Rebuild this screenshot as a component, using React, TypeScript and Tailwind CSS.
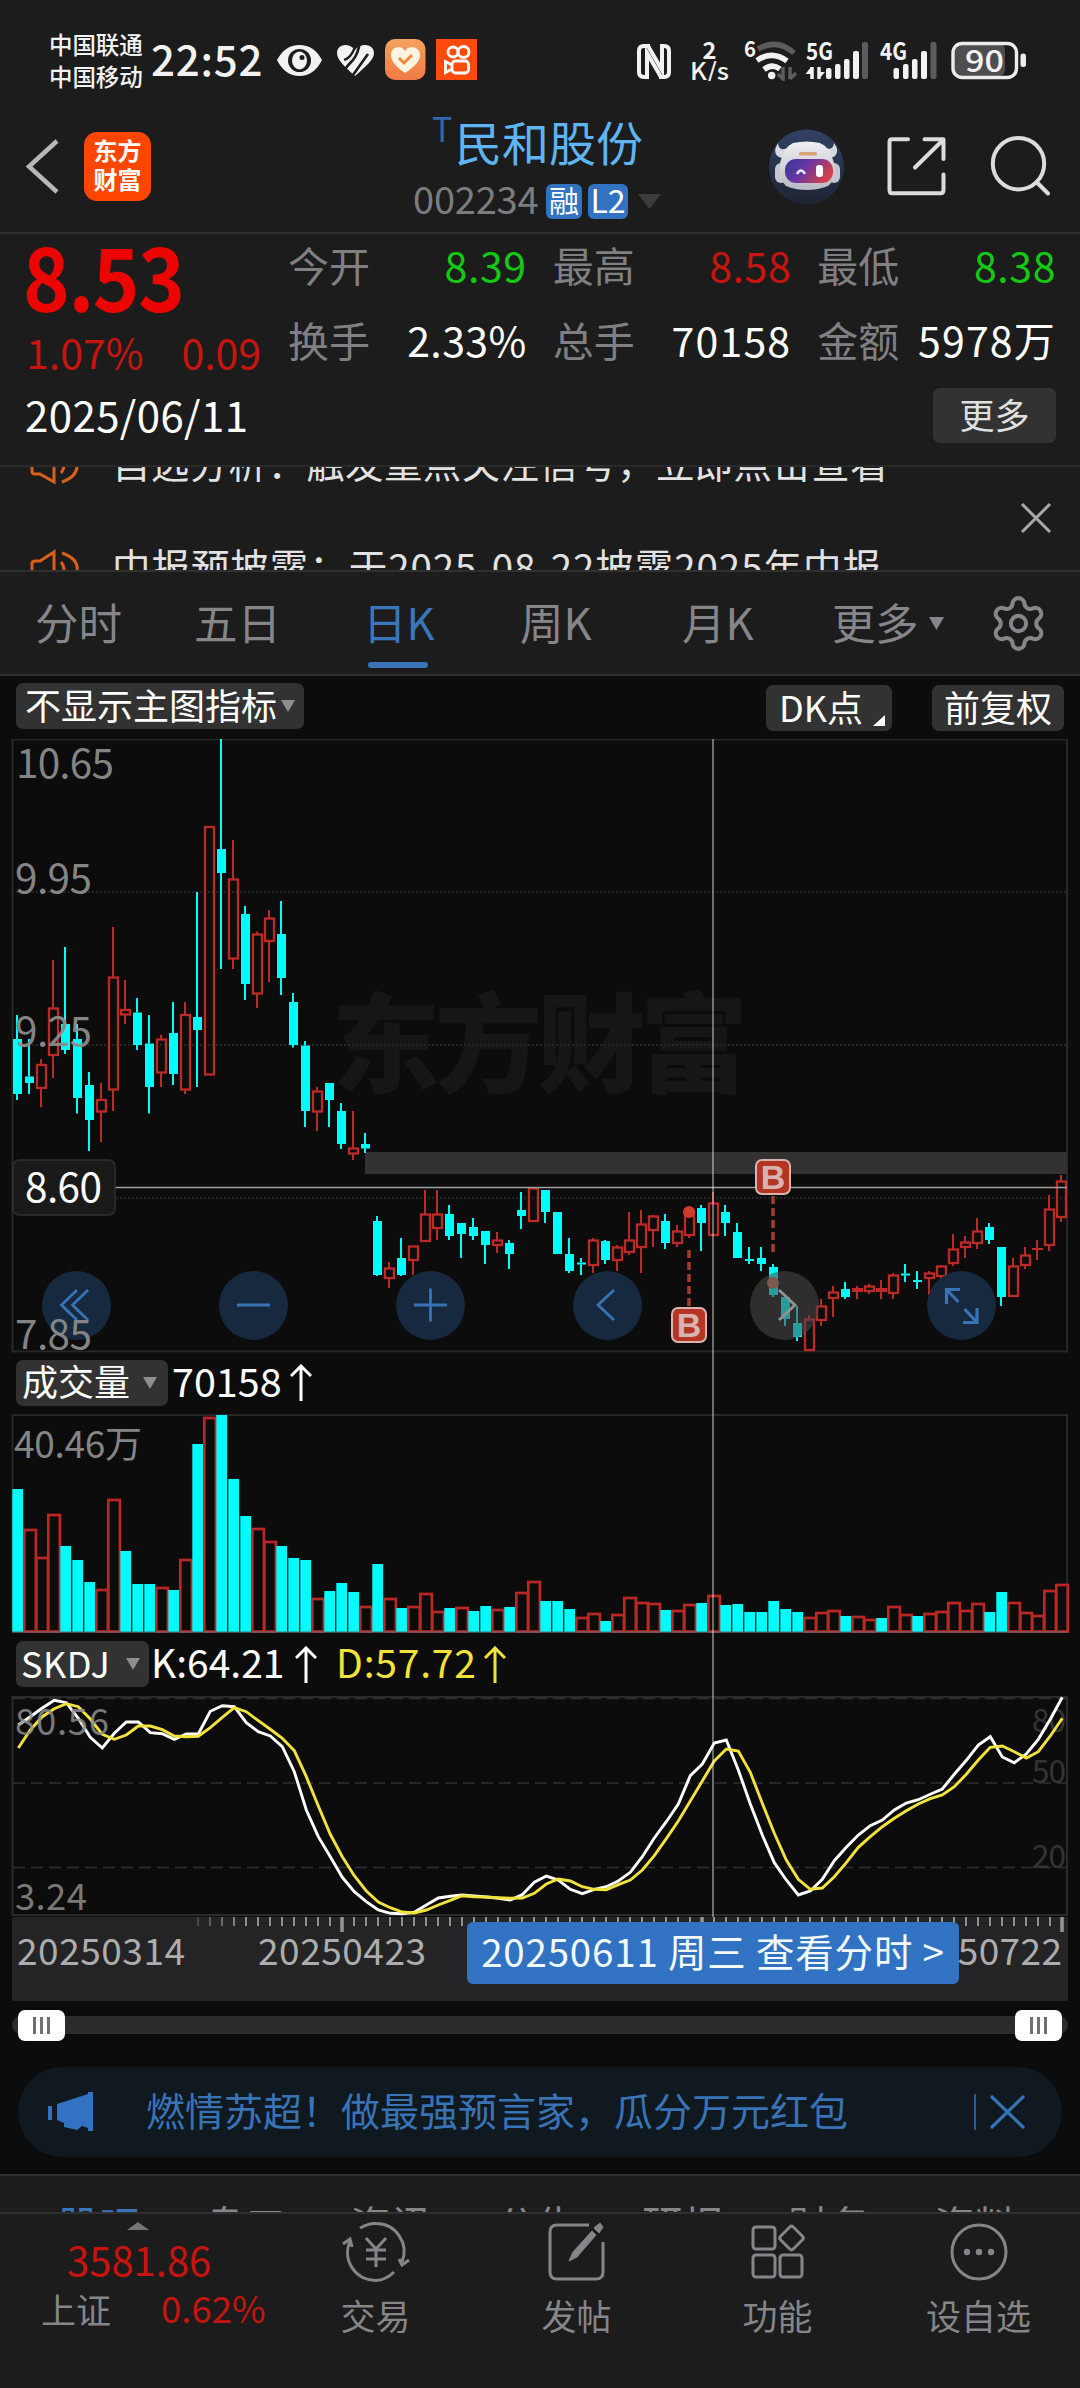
import type { ReactNode } from "react"
import { Settings } from "lucide-react"

// [up, high, bodyTop, bodyBottom, low] as offsets from the top of the price pane
type Candle = [number, number, number, number, number]

const CANDLES: Candle[] = [
  [0, 276, 300, 355, 361], [0, 300, 337.5, 344, 355], [1, 320, 325.5, 349, 368], [1, 221, 269, 316, 339],
  [0, 208, 285, 311, 315], [0, 285, 300, 359, 374.5], [0, 333, 346, 381, 412], [1, 344, 360.5, 372.5, 403],
  [1, 188, 238, 350.5, 372], [1, 241, 270.5, 275.5, 285], [0, 259, 273.5, 306, 311], [0, 276, 304.5, 348, 374.5],
  [1, 296, 300, 333.5, 348], [0, 263, 294, 335, 346], [1, 263, 275.5, 350.5, 355], [0, 153, 278, 291, 348],
  [1, 87.5, 87.5, 335.5, 335.5], [0, 0, 110, 134, 230], [1, 101, 140, 219.5, 230], [0, 167, 175, 245, 261],
  [1, 192.5, 195, 254.5, 269], [1, 171, 179, 202, 243], [0, 162, 195, 239, 256], [0, 254, 263, 306, 308.5],
  [0, 302, 306.5, 372, 388], [1, 348, 352, 372.5, 392], [0, 344, 344, 361, 388], [0, 364, 372, 405, 410],
  [1, 372, 409, 414.5, 421], [0, 394, 405, 409.5, 414], [0, 477, 482, 536, 537], [1, 523, 529, 539, 549],
  [0, 499, 519, 536, 537], [1, 507, 507, 521, 536], [1, 451, 475, 502, 503], [1, 451, 475, 489, 501],
  [0, 466, 475, 497, 501], [0, 484, 484, 495, 519], [0, 479, 488, 497, 501], [0, 492, 492, 506, 525],
  [1, 493, 501, 506, 514], [0, 501, 504, 515, 530], [0, 453, 471, 477, 490], [1, 448, 449, 482, 482],
  [0, 451, 451, 473, 484], [0, 473, 473, 515, 515], [0, 499, 515, 532, 534], [0, 519, 523.5, 525.5, 536],
  [1, 499, 501, 526, 534], [0, 501, 502, 521, 525], [1, 506, 508, 521, 532], [1, 473, 501, 513, 516],
  [1, 471, 485, 508, 534], [1, 476, 477, 491, 508], [0, 475, 482, 504, 510], [1, 486, 492, 504, 508],
  [1, 471, 471, 496, 499], [0, 466, 469, 484, 512], [1, 453, 464, 496, 497], [0, 466, 473, 484, 497],
  [0, 484, 493, 519, 519], [0, 508, 520, 522, 525], [0, 508, 519, 525, 532], [0, 525, 528, 556, 558],
  [0, 558, 558, 580, 587], [0, 567, 584, 598, 602], [1, 576, 580, 611, 612], [1, 560, 567, 581, 587],
  [1, 547, 553, 559, 578], [0, 543, 550, 558, 560], [1, 547, 549, 553, 560], [1, 545, 547, 552, 555],
  [1, 541, 549, 553, 560], [1, 534, 536, 554, 560], [0, 525, 534.5, 536.5, 543], [0, 532, 541, 543, 550],
  [1, 532, 534, 539, 556], [1, 526, 527, 537, 545], [1, 495, 510, 524, 527], [1, 497, 503, 508, 519],
  [1, 479, 492, 504, 510], [0, 484, 488, 501, 505], [0, 508, 508, 558, 567], [1, 519, 527, 557, 558],
  [1, 508, 516, 526, 530], [1, 501, 509, 511, 521], [1, 456, 470, 506, 512], [1, 436, 442, 478, 483],
]

// bar heights, negative ones are falling days
const VOLUMES = [
  -143, 103, 75, 118, -86, -72, -50, 43, 133, -81, -48, -48, 45, -42, 73, -188, 215, -217, -153, -116, 104, 91,
  -86, -74, -72, 34, -41, -49, -40, 26, -68, 34, -24, 26, 39, 21, -24, 25, -21, -26, 23, -25, 40, 51, -31, -31,
  -23, 15, 19, -11, 18, 35, 30, 29, -22, 22, 28, -29, 37, -27, -28, -20, -20, -31, -23, -20, 15, 20, 22, -16,
  16, 13, -14, 26, 18, -16, 19, 21, 30, 22, 29, -20, -40, 30, 20, 17, 42, 48,
]

const K_LINE = [
  135, 110, 84, 61, 68, 115, 172, 204, 160, 126, 126, 158, 161, 178, 162, 162, 94, 77, 80, 128, 155, 168, 200, 275,
  390, 470, 530, 592, 635, 665, 690, 700, 701, 697, 675, 654, 649, 645, 648, 651, 655, 660, 644, 607, 588, 600, 628,
  641, 628, 620, 603, 577, 530, 474, 425, 372, 287, 252, 189, 180, 270, 372, 465, 548, 600, 645, 633, 598, 542, 502,
  465, 437, 420, 390, 369, 359, 343, 327, 283, 241, 195, 170, 231, 248, 222, 178, 118, 52,
]

const D_LINE = [
  204, 150, 110, 86, 71, 80, 117, 163, 178, 165, 138, 138, 149, 168, 170, 169, 143, 112, 83, 95, 122, 148, 175, 212,
  290, 378, 463, 530, 587, 633, 666, 683, 696, 699, 690, 675, 661, 647, 650, 651, 653, 655, 654, 640, 612, 597, 603,
  620, 628, 629, 614, 600, 570, 527, 476, 423, 363, 303, 243, 207, 213, 277, 370, 460, 540, 598, 628, 624, 590, 548,
  502, 470, 440, 415, 392, 372, 356, 345, 320, 283, 240, 202, 198, 215, 234, 215, 168, 115,
]

const toPoints = (values: number[]) =>
  values.map((v, i) => `${(18.3 + i * 12).toFixed(1)},${((v - 48) / 3).toFixed(1)}`).join(" ")

function StatusBar() {
  return (
    <div className="flex h-[104px] shrink-0 items-center pt-[16px] pl-[49px] text-[#f2f2f2]">
      <div className="w-[96px] text-[23.5px] font-medium leading-[32.5px] tracking-[-0.1px]">
        <div>中国联通</div>
        <div>中国移动</div>
      </div>
      <div className="ml-[6px] w-[120px] pb-[4px] text-[42px] font-medium leading-none tracking-[0.8px]">22:52</div>
      <svg className="ml-[6px] h-[42px] w-[200px] shrink-0" viewBox="277 39 200 42">
        <path d="M277 60 Q285 45 299.500 45 Q314 45 322 60 Q314 76 299.500 76 Q285 76 277 60Z" fill="#f2f2f2" />
        <circle cx="299.500" cy="60.500" r="11.500" fill="#1c1c1c" />
        <ellipse cx="299.500" cy="60.500" rx="7.500" ry="9" fill="#f2f2f2" />
        <circle cx="302" cy="57.500" r="2.500" fill="#1c1c1c" />
        <path d="M355 76 C345 67 337 60 337 53 C337 44 349 42 355 50 C361 42 374 44 374 53 C374 60 365 67 355 76Z" fill="#f2f2f2" />
        <path d="M345 69 Q349 64 353 60 Q358 54 360 42 M353 75 L368 54" stroke="#1c1c1c" strokeWidth="2.600" fill="none" />
        <path d="M344 60 Q351 58 355 47" stroke="#1c1c1c" strokeWidth="2.200" fill="none" />
        <defs>
          <linearGradient id="care" x1="0" y1="0" x2="0" y2="1">
            <stop offset="0" stopColor="#f5a25e" />
            <stop offset="1" stopColor="#f27a45" />
          </linearGradient>
        </defs>
        <rect x="385" y="39" width="40.500" height="41" rx="10" fill="url(#care)" />
        <path d="M405 73 C392 64 391 58 391 55 C391 47 401 44 405 51 C409 44 420 47 420 55 C420 60 417 65 405 73Z" fill="#fff3e2" />
        <path d="M399 58 L404 63 L412 55" stroke="#f08a3c" strokeWidth="3" fill="none" />
        <rect x="436" y="39" width="41" height="41" fill="#ff4a0c" />
        <g stroke="#fff" strokeWidth="2.800" fill="none">
          <circle cx="453" cy="52" r="5" />
          <circle cx="463.500" cy="52" r="5.500" />
          <rect x="452" y="61" width="16.500" height="12" rx="3.500" />
          <path d="M452 65 L445.500 61.500 V72.500 L452 69" />
        </g>
      </svg>
      <svg className="ml-[158px] h-[42px] w-[400px] shrink-0" viewBox="635 38 400 42" fill="#f2f2f2">
        <g fill="none" stroke="#f2f2f2" strokeWidth="4">
          <path d="M650 45 H644 Q639 45 639 50 V71 Q639 76 644 76 H647 V52 L661 76" />
          <path d="M648 45 L662 69 V45 H664 Q669 45 669 50 V71 Q669 76 664 76 H659" />
        </g>
        <text x="702.500" y="58" fontSize="23.500" fontWeight="700">2</text>
        <text x="690" y="79" fontSize="23.500" fontWeight="500" textLength="39" lengthAdjust="spacingAndGlyphs">K/s</text>
        <text x="744" y="56" fontSize="22" fontWeight="700" textLength="12" lengthAdjust="spacingAndGlyphs">6</text>
        <g fill="none" strokeWidth="5.500" strokeLinecap="butt">
          <path d="M758 48 Q777 37 794 52" stroke="#5c5c5e" />
          <path d="M757 59.500 Q772 49 787 60" stroke="#f2f2f2" />
          <path d="M764 68.500 Q772 62 780 68" stroke="#f2f2f2" />
        </g>
        <circle cx="771.700" cy="74.500" r="3.700" />
        <path d="M783 66 V78 L778 73 M790 66 V78 M790 78 L796 72" stroke="#5c5c5e" strokeWidth="3.500" fill="none" />
        <text x="806" y="59" fontSize="23.500" fontWeight="700" textLength="27" lengthAdjust="spacingAndGlyphs">5G</text>
        <path d="M812 66 V78 M819 66 V78" stroke="#f2f2f2" strokeWidth="3.500" />
        <path d="M811 66 L805.500 73 H811Z M819 78 L825 71 H819Z" />
        <rect x="826" y="67" width="5.500" height="11" rx="2" />
        <rect x="835" y="63" width="5.500" height="15" rx="2" />
        <rect x="844" y="58" width="5.500" height="20" rx="2" />
        <rect x="853" y="50" width="6" height="28" rx="2" />
        <rect x="862" y="41" width="6" height="37" rx="2" fill="#5c5c5e" />
        <text x="880" y="59" fontSize="23.500" fontWeight="700" textLength="27" lengthAdjust="spacingAndGlyphs">4G</text>
        <rect x="893.500" y="67" width="5.500" height="11" rx="2" />
        <rect x="903" y="63" width="5.500" height="15" rx="2" />
        <rect x="912" y="58" width="5.500" height="20" rx="2" />
        <rect x="921" y="50" width="6" height="28" rx="2" />
        <rect x="930.500" y="41" width="6" height="37" rx="2" fill="#5c5c5e" />
        <rect x="954" y="43" width="51" height="32" rx="6" fill="#4e4e50" />
        <rect x="953" y="42.500" width="63.500" height="34" rx="9" fill="none" stroke="#ececec" strokeWidth="3.400" />
        <rect x="1020.500" y="52.500" width="5.500" height="13.500" rx="2.500" fill="#ececec" />
        <text x="965" y="71" fontSize="31" fontWeight="500" textLength="39" lengthAdjust="spacingAndGlyphs">90</text>
      </svg>
    </div>
  )
}

function Header() {
  return (
    <header className="flex h-[130px] shrink-0 items-start border-b-2 border-[#303030] text-white">
      <svg className="mt-[34px] ml-[24px] h-[56px] w-[38px]" viewBox="0 0 38 56" fill="none" stroke="#b8b8b8" strokeWidth="4.500">
        <path d="M33 3 L5 28.500 L33 54" />
      </svg>
      <div className="mt-[28px] ml-[22px] flex h-[69px] w-[67px] flex-col items-center rounded-[13px] bg-[#ff4600] pt-[4px] text-[24px] font-bold leading-[28.5px]">
        <span>东方</span>
        <span>财富</span>
      </div>
      <div className="ml-[261px] w-[260px]">
        <div className="flex h-[72px] pl-[20px]">
          <span className="mt-[7px] w-[23px] text-[34px] leading-none text-[#2f68a8]">T</span>
          <span className="mt-[13px] whitespace-nowrap text-[47px] leading-none text-[#5fb4f3]">民和股份</span>
        </div>
        <div className="flex h-[50px] items-center pl-[1px]">
          <span className="w-[133px] pb-[6px] text-[38px] leading-none tracking-[-0.2px] text-[#7c7c80]">002234</span>
          <span className="flex h-[35px] w-[36px] items-center justify-center rounded-[6px] bg-[#3173c0] pb-[4px] text-[30px] leading-none">融</span>
          <span className="ml-[6px] flex h-[35px] w-[40px] items-center justify-center rounded-[6px] bg-[#3173c0] pb-[4px] text-[32px] leading-none">L2</span>
          <svg className="ml-[10px] h-[15px] w-[23px]" viewBox="0 0 23 15"><path d="M0 0 H23 L11.500 15Z" fill="#3c3c3e" /></svg>
        </div>
      </div>
      <svg className="mt-[25px] ml-[96px] h-[76px] w-[77px]" viewBox="0 0 77 76">
        <defs>
          <linearGradient id="visor" x1="0" y1="0" x2="1" y2="0.4">
            <stop offset="0" stopColor="#33399c" />
            <stop offset="0.5" stopColor="#6a35a0" />
            <stop offset="1" stopColor="#d0404e" />
          </linearGradient>
          <linearGradient id="sky" x1="0" y1="0" x2="0" y2="1">
            <stop offset="0" stopColor="#324264" />
            <stop offset="1" stopColor="#1d2433" />
          </linearGradient>
          <linearGradient id="shell" x1="0" y1="0" x2="0" y2="1">
            <stop offset="0" stopColor="#eeeef2" />
            <stop offset="1" stopColor="#b9bac2" />
          </linearGradient>
        </defs>
        <circle cx="38.500" cy="38" r="37.500" fill="url(#sky)" />
        <path d="M10 14 Q4 24 11 28 Q14 30 18 27 L21 18 Q11 24 10 14Z M66 14 Q72 22 67 27 Q63 30 59 26 L55 18 Q65 23 66 14Z" fill="#d8d9e0" />
        <rect x="7" y="34" width="12" height="20" rx="6" fill="#c4c6d0" />
        <rect x="60" y="34" width="12" height="20" rx="6" fill="#c4c6d0" />
        <path d="M25 14 Q39 11 52 14 Q62 18 66 34 Q69 50 60 57 Q50 61 39 61 Q27 61 18 57 Q10 50 12 34 Q16 18 25 14Z" fill="url(#shell)" />
        <rect x="17" y="30" width="48" height="24" rx="11" fill="url(#visor)" />
        <path d="M29 45 Q33 38 37 45" stroke="#dfe4ff" strokeWidth="2.500" fill="none" />
        <rect x="48" y="36" width="7" height="12" rx="3" fill="#fff" />
        <rect x="31" y="23" width="18" height="3.500" rx="1.500" fill="#d9a37a" />
      </svg>
      <svg className="mt-[31px] ml-[39px] h-[62px] w-[62px]" viewBox="0 0 62 62" fill="none" stroke="#dcdcdc" strokeWidth="4" strokeLinecap="round" strokeLinejoin="round">
        <path d="M24 4.300 H8 Q5.500 4.300 5.500 7 V55 Q5.500 58.300 8 58.300 H56.500 Q59.500 58.300 59.500 55 V39.500" />
        <path d="M40.500 4.300 H59.500 V24 M59 5 L31 32.500" />
      </svg>
      <svg className="mt-[30px] ml-[41px] h-[64px] w-[64px]" viewBox="0 0 64 64" fill="none" stroke="#dcdcdc" strokeWidth="4" strokeLinecap="round">
        <circle cx="31.500" cy="29.700" r="25.700" />
        <path d="M50 48.500 L61 59.500" />
      </svg>
    </header>
  )
}

function Quote({ label, value, tone }: { label: string; value: string; tone: string }) {
  return (
    <div className="flex items-center justify-between whitespace-nowrap pb-[5px] text-[41px] leading-none">
      <span className="text-[#808084]">{label}</span>
      <span className={tone}>{value}</span>
    </div>
  )
}

function QuotePanel() {
  return (
    <section className="h-[233px] shrink-0 border-b-2 border-[#2a2a2a] text-[41px] leading-none">
      <div className="flex h-[152px] pl-[26px]">
        <div className="w-[262px]">
          <div className="flex h-[88px] items-center pb-[9px] text-[88px] font-bold leading-none">
            <span className="origin-left -translate-x-[3px] scale-x-[0.9] tracking-[-1.5px] text-[#eb0400]">8.53</span>
          </div>
          <div className="flex h-[64px] items-center gap-[38px] pb-[5px] text-[41px] text-[#c8140f]">
            <span>1.07%</span>
            <span>0.09</span>
          </div>
        </div>
        <div className="grid w-[768px] grid-cols-3 grid-rows-[66px_84px] gap-x-[26px]">
          <Quote label="今开" value="8.39" tone="tracking-[0.6px] text-[#14c814]" />
          <Quote label="最高" value="8.58" tone="tracking-[0.6px] text-[#c8140f]" />
          <Quote label="最低" value="8.38" tone="tracking-[0.6px] text-[#14c814]" />
          <Quote label="换手" value="2.33%" tone="tracking-[0.4px] text-white" />
          <Quote label="总手" value="70158" tone="tracking-[1.2px] text-white" />
          <Quote label="金额" value="5978万" tone="tracking-[1.2px] text-white" />
        </div>
      </div>
      <div className="flex items-start justify-between pr-[24px] pl-[25px]">
        <span className="pt-[7px] text-[42px] tracking-[0.4px] text-white">2025/06/11</span>
        <span className="mt-[2px] flex h-[55px] w-[123px] items-center justify-center rounded-[7px] bg-[#323232] pb-[5px] text-[35px] text-[#e0e0e0]">更多</span>
      </div>
    </section>
  )
}

function Speaker() {
  return (
    <svg className="h-[40px] w-[52px] shrink-0" viewBox="0 0 52 40" fill="none" stroke="#d9601a" strokeWidth="3">
      <path d="M25 3 V37 L11 29 H6 Q3 29 3 26 V15 Q3 12 6 12 H11Z" />
      <path d="M32 13 Q38 20 32 28 M33 4 Q50 10 48 22 Q47 32 33 37" />
    </svg>
  )
}

function NewsTicker() {
  return (
    <section className="flex h-[105px] shrink-0 justify-between overflow-hidden border-b-2 border-[#303030] pr-[28px] pl-[29px]">
      <div className="mt-[-54px] text-[38.5px] leading-none text-[#e2e2e2]">
        <div className="flex h-[104px] items-center whitespace-nowrap">
          <Speaker />
          <span className="ml-[31px] pb-[8px] tracking-[0.35px]">自选分析：触发重点关注信号，立即点击查看</span>
        </div>
        <div className="flex h-[104px] items-center whitespace-nowrap">
          <Speaker />
          <span className="ml-[31px] pb-[8px] tracking-[0.95px]">中报预披露：于2025-08-22披露2025年中报</span>
        </div>
      </div>
      <svg className="mt-[35px] h-[32px] w-[32px]" viewBox="0 0 32 32" stroke="#a8a8a8" strokeWidth="3">
        <path d="M2 2 L30 30 M30 2 L2 30" />
      </svg>
    </section>
  )
}

function PeriodTabs() {
  return (
    <nav className="flex h-[104px] shrink-0 border-b-2 border-[#303030] pl-[35px] text-[43.5px] leading-none text-[#85858a]">
      <span className="w-[159px] pt-[28px]">分时</span>
      <span className="w-[169px] pt-[28px]">五日</span>
      <span className="flex w-[157px] flex-col pt-[28px] text-[#3a76bb]">
        日K
        <i className="mt-[18px] ml-[5px] h-[6px] w-[60px] rounded-full bg-[#3a73b8]" />
      </span>
      <span className="w-[162px] pt-[28px]">周K</span>
      <span className="w-[150px] pt-[28px]">月K</span>
      <span className="w-[97px] whitespace-nowrap pt-[28px] tracking-[-0.5px]">更多</span>
      <svg className="mt-[45px] h-[13px] w-[15px]" viewBox="0 0 15 13"><path d="M0 0 H15 L7.500 13Z" fill="#85858a" /></svg>
      <Settings className="mt-[21px] ml-[44px] h-[61px] w-[61px]" strokeWidth={1.6} />
    </nav>
  )
}

function Chip({ className, children }: { className: string; children: ReactNode }) {
  return (
    <span className={`flex h-[46px] shrink-0 items-center whitespace-nowrap rounded-[7px] bg-[#323232] text-[36px] leading-none text-white ${className}`}>
      {children}
    </span>
  )
}

function Caret({ className }: { className: string }) {
  return <svg className={`h-[12px] w-[14px] ${className}`} viewBox="0 0 14 12"><path d="M0 0 H14 L7 12Z" fill="#8e8e92" /></svg>
}

function UpArrow({ className }: { className: string }) {
  return (
    <svg className={`h-[37px] w-[22px] ${className}`} viewBox="0 0 22 37" fill="none" stroke="currentColor" strokeWidth="3">
      <path d="M11 37 V3 M1 12 L11 2 L21 12" />
    </svg>
  )
}

function CandleStick({ candle, index }: { candle: Candle; index: number }) {
  const [up, high, top, bottom, low] = candle
  const x = 17 + index * 12
  const color = up ? "#bd2927" : "#00fdfd"
  const flat = bottom - top < 5
  return (
    <g>
      {high < top && <rect x={x - 1} y={high} width={2} height={top - high} fill={color} />}
      {low > bottom && <rect x={x - 1} y={bottom} width={2} height={low - bottom} fill={color} />}
      {up && !flat ? (
        <rect x={x - 4} y={top + 0.5} width={9} height={bottom - top - 0.5} fill="none" stroke={color} strokeWidth={2.3} />
      ) : (
        <rect x={up ? x - 5 : x - 4} y={top} width={up ? 11 : 9} height={Math.max(bottom - top, 2)} fill={color} />
      )}
    </g>
  )
}

function BuyMark({ x, y }: { x: number; y: number }) {
  return (
    <g>
      <rect x={x - 17} y={y - 17} width="34" height="34" rx="6" fill="#b43524" stroke="#d9b3ad" strokeWidth="2" />
      <text x={x} y={y + 12} textAnchor="middle" fontSize="34" fontWeight="700" fill="#d6b4af" fontFamily="Liberation Sans">B</text>
    </g>
  )
}

function PricePane() {
  return (
    <svg className="block h-[614px] w-[1080px] shrink-0" viewBox="0 0 1080 614">
      <text x="332" y="345" fill="#161616" fontWeight="900" fontSize="108" textLength="416">东方财富</text>
      <rect x="12.500" y="0.500" width="1054.500" height="612" fill="none" stroke="#272727" strokeWidth="2" />
      {[153, 306, 459].map((y) => (
        <path key={y} d={`M12 ${y} H1067`} stroke="#2c2c2c" strokeWidth="1.500" strokeDasharray="2 2" />
      ))}
      <rect x="365" y="413" width="702" height="22" fill="#323232" />
      {CANDLES.map((c, i) => <CandleStick key={i} candle={c} index={i} />)}
      <path d="M115 448.500 H1067" stroke="#a0a0a0" strokeWidth="1.500" />
      <path d="M689 511 V567 M773 457 V513" stroke="#a33c2e" strokeWidth="3.500" strokeDasharray="8 4" />
      <circle cx="689" cy="473" r="6" fill="#d03a28" />
      <circle cx="773" cy="544" r="6" fill="#b8685a" />
      <BuyMark x={689} y={586} />
      <BuyMark x={773} y={438} />

      {[76.5, 253.5, 430.5, 607.5, 961.5].map((x) => <circle key={x} cx={x} cy="566.500" r="34.500" fill="#17293f" />)}
      <circle cx="784.500" cy="566.500" r="34.500" fill="#4a4a4a" fillOpacity="0.55" />
      <g fill="none" stroke="#3873b6" strokeWidth="2.800">
        <path d="M77 551 L61.500 566 L77 581 M88 551 L72.500 566 L88 581" />
        <path d="M237 566 H270 M414 566 H447 M430.500 549.500 V582.500" />
        <path d="M614 551 L598 566 L614 581" />
        <path d="M960 550.500 H946.500 V565 M946.500 550.500 L958.500 563 M963 583.500 H977 V569 M977 583.500 L964.500 570" strokeWidth="3.200" />
      </g>
      <path d="M779 551 L795 566 L779 581" fill="none" stroke="#929292" strokeWidth="2.800" />

      <g fill="#8c8c8c" fillOpacity="0.95" fontSize="40.500">
        <text x="16" y="38.500" textLength="98">10.65</text>
        <text x="15" y="153.500" textLength="77">9.95</text>
        <text x="15" y="307" textLength="77">9.25</text>
        <text x="15" y="609.500" textLength="77">7.85</text>
      </g>
      <rect x="13" y="421" width="102" height="55" rx="6" fill="#1a1a1a" stroke="#303030" strokeWidth="1.500" />
      <text x="25" y="462.500" fontSize="40.500" textLength="77" fill="#fff">8.60</text>
    </svg>
  )
}

function VolumePane() {
  return (
    <svg className="block h-[220px] w-[1080px] shrink-0" viewBox="0 0 1080 220">
      <rect x="12.500" y="1" width="1054.500" height="217" fill="none" stroke="#272727" strokeWidth="2" />
      <text x="14" y="44" fontSize="37" textLength="128" fill="#858585">40.46万</text>
      {VOLUMES.map((v, i) => {
        const x = 12.3 + i * 12
        return v < 0 ? (
          <rect key={i} x={x} y={218 + v} width={10.8} height={-v} fill="#00fdfd" />
        ) : (
          <rect key={i} x={x} y={219 - v} width={11.6} height={v - 1.5} fill="none" stroke="#bb2725" strokeWidth={2.7} />
        )
      })}
      <path d="M12 218 H1067" stroke="#5f6f6f" strokeWidth="1.500" strokeOpacity="0.7" />
    </svg>
  )
}

function SkdjPane() {
  return (
    <svg className="block h-[221px] w-[1080px] shrink-0" viewBox="0 0 1080 221">
      <rect x="12.500" y="1" width="1054.500" height="218" fill="none" stroke="#2a2a2a" strokeWidth="2" />
      {[2.5, 87, 171.5].map((y) => (
        <path key={y} d={`M13 ${y} H1067`} stroke="#303030" strokeWidth="1.500" strokeDasharray="12 6" />
      ))}
      <g fontSize="31.500" fill="#343434">
        <text x="1032" y="36" textLength="34">80</text>
        <text x="1032" y="87" textLength="34">50</text>
        <text x="1032" y="172" textLength="34">20</text>
      </g>
      <polyline points={toPoints(K_LINE)} fill="none" stroke="#fff" strokeWidth="2.900" />
      <polyline points={toPoints(D_LINE)} fill="none" stroke="#f2e33a" strokeWidth="2.900" />
      <g fontSize="36.500" fill="#8c8c8c" fillOpacity="0.85">
        <text x="15" y="39" textLength="94">80.56</text>
        <text x="15" y="214" textLength="72">3.24</text>
      </g>
    </svg>
  )
}

function DateAxis() {
  return (
    <div className="relative h-[84px] w-[1056px] shrink-0 bg-[#242426]">
      <svg className="block h-[84px] w-[1056px]" viewBox="12 0 1056 84">
        {Array.from({ length: 73 }, (_, i) => i + 15).map((i) => {
          const major = i === 27 || i === 57 || i === 87
          return (
            <rect
              key={i}
              x={(major ? 16.2 : 17) + i * 12}
              y={0}
              width={major ? 3.6 : 2}
              height={major ? 15 : 9}
              fill="#929292"
              fillOpacity={Math.min(1, (i - 13) / 6)}
            />
          )
        })}
        <g fontSize="37" fill="#adadad">
          <text x="17" y="48" textLength="168">20250314</text>
          <text x="258" y="48" textLength="168">20250423</text>
          <text x="895" y="48" textLength="167">20250722</text>
        </g>
      </svg>
      <div className="absolute top-[5px] left-[455px] flex h-[62px] w-[492px] items-center justify-center whitespace-nowrap rounded-[6px] bg-[#3173c2] pb-[5px] text-[38.5px] leading-none tracking-[0.8px] text-[#f2f8ff]">
        20250611 周三 查看分时 &gt;
      </div>
    </div>
  )
}

function Thumb() {
  return (
    <div className="flex h-[31px] w-[47px] items-center justify-center gap-[4.5px] rounded-[7px] bg-white">
      <i className="h-[17px] w-[2.5px] bg-[#707070]" />
      <i className="h-[17px] w-[2.5px] bg-[#707070]" />
      <i className="h-[17px] w-[2.5px] bg-[#707070]" />
    </div>
  )
}

function ChartArea() {
  return (
    <section className="relative flex h-[1498px] shrink-0 flex-col bg-[#0c0c0c] text-white">
      <div className="flex h-[63px] shrink-0 pt-[7px] pl-[16px]">
        <Chip className="w-[288px] pl-[9px]">
          <span className="pb-[5px]">不显示主图指标</span>
          <Caret className="ml-[4px]" />
        </Chip>
        <Chip className="mt-[2px] ml-[462px] w-[126px] pl-[13px]">
          <span className="w-[89px] pb-[5px]">DK点</span>
          <svg className="mt-[24px] ml-[5px] h-[11px] w-[12px]" viewBox="0 0 12 11"><path d="M12 0 V11 H0Z" fill="#fff" /></svg>
        </Chip>
        <Chip className="mt-[2px] ml-[40px] w-[132px] justify-center">
          <span className="pb-[5px]">前复权</span>
        </Chip>
      </div>
      <PricePane />
      <div className="flex h-[61px] shrink-0 items-center pb-[2px] pl-[16px] text-[39.5px] leading-none">
        <Chip className="w-[152px] pl-[6px]">
          <span className="pb-[5px]">成交量</span>
          <Caret className="ml-[13px]" />
        </Chip>
        <span className="w-[118px] pb-[5px] pl-[4px]">70158</span>
        <UpArrow className="ml-[4px]" />
      </div>
      <VolumePane />
      <div className="flex h-[62px] shrink-0 items-center pb-[2px] pl-[16px] text-[39px] leading-none">
        <Chip className="w-[133px] pl-[5px]">
          <span className="w-[94px] pb-[5px] tracking-[0.5px]">SKDJ</span>
          <Caret className="ml-[11px]" />
        </Chip>
        <span className="w-[140px] pb-[5px] pl-[2px]">K:64.21</span>
        <UpArrow className="ml-[6px]" />
        <span className="ml-[19px] w-[142px] pb-[5px] tracking-[0.8px] text-[#f2e33a]">D:57.72</span>
        <UpArrow className="ml-[6px] text-[#f2e33a]" />
      </div>
      <SkdjPane />
      <div className="absolute top-[63px] left-[712px] h-[1178px] w-[2px] bg-white/40" />
      <div className="pl-[12px]"><DateAxis /></div>
      <div className="mt-[15px] ml-[12px] flex h-[18px] w-[1056px] shrink-0 items-center justify-between rounded-full bg-[#2c2c2e] px-[6px]">
        <Thumb />
        <Thumb />
      </div>
      <div className="mt-[33px] ml-[18px] flex h-[90px] w-[1044px] shrink-0 items-center rounded-full bg-[#101820] pl-[30px] text-[#3873b6]">
        <svg className="h-[40px] w-[46px]" viewBox="0 0 46 40" fill="#3173c2">
          <path d="M0 14 H4 V28 H0Z M9 12 L40 2 V0 H45 V39 H40 V36 L34 34 L29 38 L16 35 V31 L9 28Z" />
        </svg>
        <span className="ml-[52px] whitespace-nowrap pb-[5px] text-[39px] leading-none">燃情苏超！做最强预言家，瓜分万元红包</span>
        <i className="ml-[126px] h-[36px] w-[2px] bg-[#2c5a8e]" />
        <svg className="ml-[14px] h-[34px] w-[35px]" viewBox="0 0 35 34" stroke="currentColor" strokeWidth="3.200">
          <path d="M1 1 L34 33 M34 1 L1 33" />
        </svg>
      </div>
    </section>
  )
}

function InfoTabs() {
  return (
    <nav className="flex h-[38px] shrink-0 overflow-hidden border-t-2 border-[#303030] pt-[27px] pl-[58px] text-[41px] leading-none text-[#85858a]">
      <span className="w-[146px] text-[#3a76bb]">股吧</span>
      <span className="w-[146px]">盘口</span>
      <span className="w-[146px]">资讯</span>
      <span className="w-[146px]">公告</span>
      <span className="w-[146px]">研报</span>
      <span className="w-[146px]">财务</span>
      <span className="w-[100px]">资料</span>
    </nav>
  )
}

function BarItem({ label, children }: { label: string; children: ReactNode }) {
  return (
    <div className="flex w-[201px] flex-col items-center">
      <svg className="mt-[6px] h-[64px] w-[68px]" viewBox="0 0 68 64" fill="none" stroke="#85858a" strokeWidth="3">
        {children}
      </svg>
      <span className="mt-[13px]">{label}</span>
    </div>
  )
}

function BottomBar() {
  return (
    <footer className="flex h-[176px] shrink-0 border-t-2 border-[#303030] text-[35px] leading-none text-[#85858a]">
      <div className="w-[275px]">
        <svg className="mt-[8px] ml-[127px] h-[8px] w-[22px]" viewBox="0 0 22 8"><path d="M0 8 H22 L11 0Z" fill="#75757a" /></svg>
        <div className="mt-[9px] pl-[67px] text-[40px] text-[#c8140f]">3581.86</div>
        <div className="mt-[11px] flex items-center pl-[41px]">
          <span className="w-[120px]">上证</span>
          <span className="text-[36.5px] text-[#c8140f]">0.62%</span>
        </div>
      </div>
      <BarItem label="交易">
        <path d="M18 8 Q27 3 34 3.500 A28 28 0 0 1 60 42 M52 52 Q44 60 34 60.500 A28 28 0 0 1 8 21" />
        <path d="M1 24 L8 19 L10 27 M67 40 L60 45 L57 39" />
        <path d="M24 18 L34 29 L44 18 M34 29 V47 M24 30 H44 M24 39 H44" />
      </BarItem>
      <BarItem label="发帖">
        <path d="M46 5 H14 Q7 5 7 12 V52 Q7 59 14 59 H53 Q60 59 60 52 V22" />
        <path d="M49 11 L53 15 L34 37 L26 41 L30 32Z M51 8 L57 3 L60 7 L56 13Z" fill="#85858a" strokeWidth="1" />
      </BarItem>
      <BarItem label="功能">
        <rect x="9" y="7" width="22" height="22" rx="3" />
        <rect x="9" y="35" width="22" height="22" rx="3" />
        <rect x="36" y="35" width="22" height="22" rx="3" />
        <rect x="38.500" y="9" width="18" height="18" rx="2.500" transform="rotate(45 47.500 18)" />
      </BarItem>
      <BarItem label="设自选">
        <circle cx="34" cy="32" r="27" />
        <g fill="#85858a" stroke="none">
          <circle cx="22" cy="32" r="3.200" />
          <circle cx="34" cy="32" r="3.200" />
          <circle cx="46" cy="32" r="3.200" />
        </g>
      </BarItem>
    </footer>
  )
}

export default function App() {
  return (
    <div className="flex h-[2388px] w-[1080px] flex-col overflow-hidden bg-[#1c1c1c] font-['Noto_Sans_CJK_SC',sans-serif]">
      <StatusBar />
      <Header />
      <QuotePanel />
      <NewsTicker />
      <PeriodTabs />
      <ChartArea />
      <InfoTabs />
      <BottomBar />
    </div>
  )
}
